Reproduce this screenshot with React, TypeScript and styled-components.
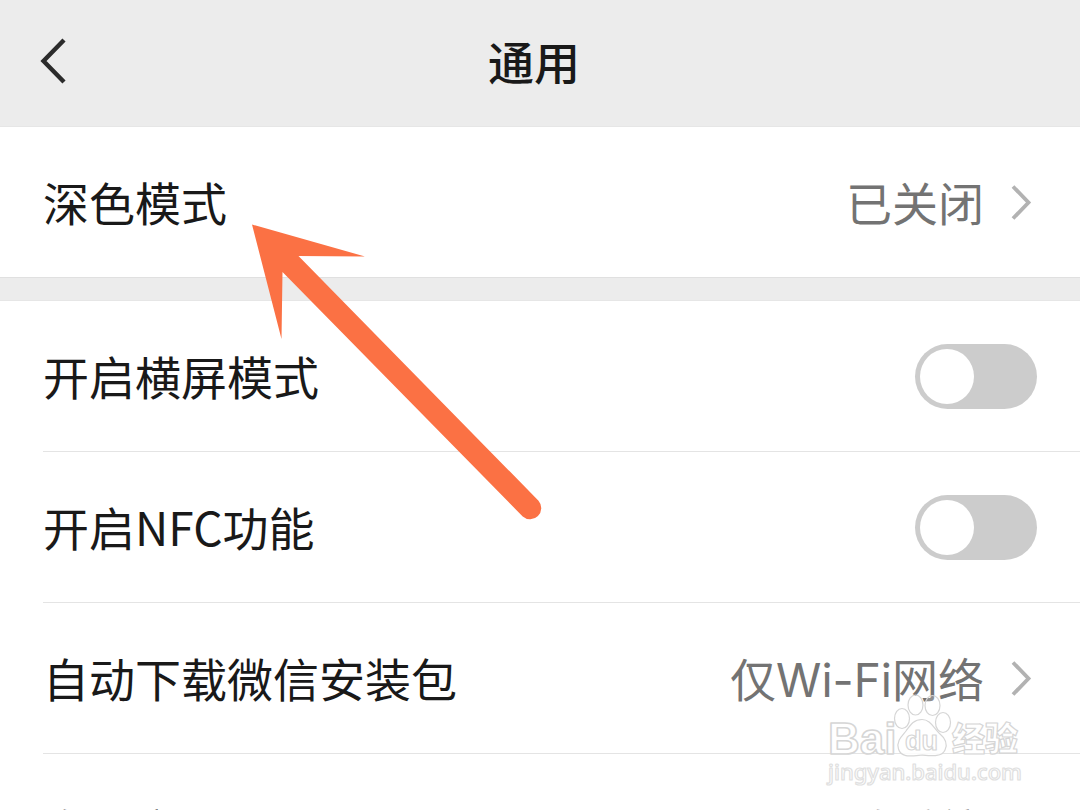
import React from "react";
import styled, { createGlobalStyle, css } from "styled-components";

const GlobalStyle = createGlobalStyle`
  *, *::before, *::after { box-sizing: border-box; }
  body { margin: 0; background: #ffffff; }
  button, input { font: inherit; color: inherit; }
`;

const Page = styled.div`
  position: relative;
  height: 100vh;
  overflow: hidden;
  background: #ececec;
  color: #191919;
  font-family: "Noto Sans CJK SC", sans-serif;
  font-size: 46px;
  line-height: 64px;
`;

const Header = styled.header`
  display: grid;
  grid-template-columns: 1fr auto 1fr;
  align-items: center;
  height: 126px;
  padding: 0 44px 4px 32px;
`;

const BackButton = styled.button`
  display: flex;
  justify-self: start;
  padding: 0 8px;
  border: 0;
  background: none;
`;

const Title = styled.h1`
  margin: 0 0 2px;
  font-size: 46px;
  font-weight: 500;
`;

const Group = styled.ul`
  margin: 0 0 22px;
  padding: 0 0 0 43px;
  list-style: none;
  background: #ffffff;
  border-top: 1px solid #e6e6e6;
  border-bottom: 1px solid #e0e0e0;
`;

const Item = styled.li`
  & + & {
    border-top: 1px solid #e4e4e4;
  }
`;

const rowLayout = css`
  display: flex;
  align-items: center;
  width: 100%;
  height: 150px;
`;

const LinkRow = styled.button`
  ${rowLayout}
  padding: 0 48px 0 0;
  border: 0;
  background: none;
  text-align: left;
`;

const SwitchRow = styled.label`
  ${rowLayout}
  padding: 0 43px 0 0;
`;

const Label = styled.span`
  flex: 1;
  margin-bottom: 2px;
`;

const Value = styled.span`
  margin: 4px 26px 0 0;
  color: #737373;
  font-family: Inter, "Noto Sans CJK SC", sans-serif;
`;

const Switch = styled.input`
  appearance: none;
  display: flex;
  align-items: center;
  width: 122px;
  height: 65px;
  margin: 0;
  padding: 0 5px;
  border-radius: 33px;
  background: #cccccc;

  &::before {
    content: "";
    width: 54px;
    height: 55px;
    border-radius: 50%;
    background: #ffffff;
  }

  &:checked {
    justify-content: flex-end;
    background: #07c160;
  }
`;

const Pointer = styled.svg`
  position: absolute;
  left: 252px;
  top: 224px;
  pointer-events: none;
`;

const Watermark = styled.svg`
  position: absolute;
  right: 50px;
  top: 690px;
  pointer-events: none;
`;

const Chevron = () => (
  <svg width="22" height="36" viewBox="0 0 22 36" fill="none" aria-hidden="true">
    <path d="M3 2.5 18.5 18.5 3 34.5" stroke="#b2b2b2" strokeWidth="3.8" />
  </svg>
);

type LinkItemProps = { label: string; value: string };

const LinkItem = ({ label, value }: LinkItemProps) => (
  <Item>
    <LinkRow type="button">
      <Label>{label}</Label>
      <Value>{value}</Value>
      <Chevron />
    </LinkRow>
  </Item>
);

const SwitchItem = ({ label }: { label: string }) => (
  <Item>
    <SwitchRow>
      <Label>{label}</Label>
      <Switch type="checkbox" role="switch" />
    </SwitchRow>
  </Item>
);

export default function App() {
  return (
    <Page>
      <GlobalStyle />
      <Header>
        <BackButton type="button" aria-label="返回">
          <svg width="28" height="48" viewBox="0 0 28 48" fill="none">
            <path d="M24 3 3.5 24 24 45" stroke="#2b2b2b" strokeWidth="4.4" />
          </svg>
        </BackButton>
        <Title>通用</Title>
      </Header>
      <main>
        <Group>
          <LinkItem label="深色模式" value="已关闭" />
        </Group>
        <Group>
          <SwitchItem label="开启横屏模式" />
          <SwitchItem label="开启NFC功能" />
          <LinkItem label="自动下载微信安装包" value="仅Wi-Fi网络" />
          <LinkItem label="多语言" value="跟随系统" />
        </Group>
      </main>
      <Pointer width="292" height="298" viewBox="0 0 292 298" aria-hidden="true">
        <path
          d="M0 .5 113 32.5 46.5 32 286.5 276.7A11.2 11.2 0 0 1 270.7 292.5L30.5 48 29.5 115Z"
          fill="#fb7144"
        />
      </Pointer>
      <Watermark width="206" height="104" viewBox="0 0 206 104">
        <g
          fill="#ffffff"
          fillOpacity="0.85"
          stroke="#d6d6d6"
          strokeWidth="1.2"
          strokeLinejoin="round"
        >
          <ellipse cx="78" cy="28.5" rx="7.5" ry="10" />
          <ellipse cx="91.5" cy="15" rx="7.5" ry="10" fillOpacity="0.2" />
          <ellipse cx="108.5" cy="15.5" rx="7.5" ry="10" fillOpacity="0.2" />
          <ellipse cx="119" cy="32.5" rx="7.5" ry="10" />
          <path d="M98 29.5C106 29.5 109 37 115 43C121 48 124 54 121 60C118 67 109 66 98 65C87 66 77 68 74.5 59C72 51 78 46 82 41C87 34 90 29.5 98 29.5Z" />
          <text x="4" y="64" fontFamily="Liberation Sans" fontWeight="700" fontSize="44" strokeWidth="1.6">
            Bai
          </text>
          <text x="81" y="60" fontFamily="Liberation Sans" fontWeight="700" fontSize="27">
            du
          </text>
          <text x="128" y="61" fontFamily="Noto Sans CJK SC" fontWeight="900" fontSize="33">
            经验
          </text>
          <text x="4" y="90" fontFamily="Noto Sans" fontWeight="500" fontSize="22" stroke="#e0e0e0">
            jingyan.baidu.com
          </text>
        </g>
      </Watermark>
    </Page>
  );
}
